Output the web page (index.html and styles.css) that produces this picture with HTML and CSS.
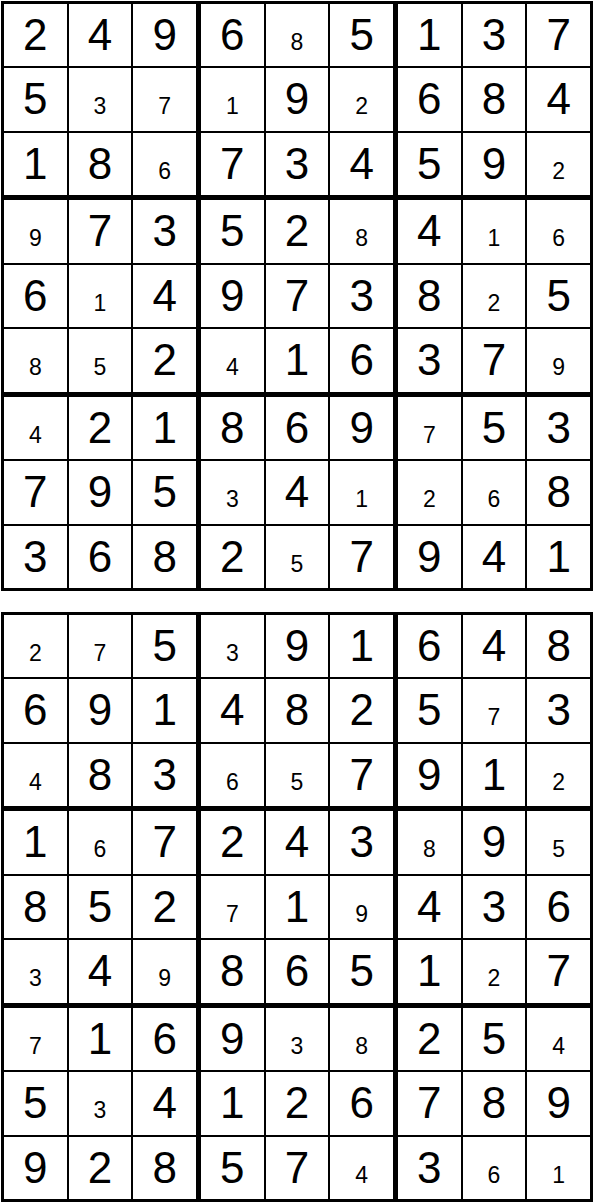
FILE: index.html
```html
<!DOCTYPE html>
<html lang="en">
<head>
  <meta charset="UTF-8">
  <meta name="viewport" content="width=device-width, initial-scale=1.0">
  <title>Sudoku</title>
  <link rel="stylesheet" href="styles.css">
</head>
<body>
  <div class="page" id="page"></div>
  <script>
    // digits per row, and which ones are printed small ("s")
    const puzzles = [
      {
        digits: ["249685137", "537192684", "186734592", "973528416", "614973825",
                 "852416379", "421869753", "795341268", "368257941"],
        small:  ["....s....", ".sss.s...", "..s.....s", "s....s.ss", ".s.....s.",
                 "ss.s....s", "s.....s..", "...s.sss.", "....s...."]
      },
      {
        digits: ["275391648", "691482573", "483657912", "167243895", "852719436",
                 "349865127", "716938254", "534126789", "928574361"],
        small:  ["ss.s.....", ".......s.", "s..ss...s", ".s....s.s", "...s.s...",
                 "s.s....s.", "s...ss..s", ".s.......", ".....s.ss"]
      }
    ];

    const page = document.getElementById('page');

    puzzles.forEach(p => {
      const grid = document.createElement('div');
      grid.className = 'sudoku';
      for (let b = 0; b < 9; b++) {
        const box = document.createElement('div');
        box.className = 'box';
        for (let k = 0; k < 9; k++) {
          const r = Math.floor(b / 3) * 3 + Math.floor(k / 3);
          const c = (b % 3) * 3 + k % 3;
          const cell = document.createElement('div');
          cell.className = 'cell';
          const span = document.createElement('span');
          if (p.small[r][c] === 's') span.className = 'small';
          span.textContent = p.digits[r][c];
          cell.appendChild(span);
          box.appendChild(cell);
        }
        grid.appendChild(box);
      }
      page.appendChild(grid);
    });
  </script>
</body>
</html>
```

FILE: styles.css
```css
body {
  margin: 0;
  background-color: #ffffff;
  font-family: "Liberation Sans", Arial, sans-serif;
}

.page {
  display: flex;
  flex-direction: column;
  gap: 21px;
  padding: 1px 0 0 1px;
}

.sudoku {
  box-sizing: border-box;
  width: 592px;
  height: 590px;
  border: 3px solid #000000;
  background-color: #000000;
  display: grid;
  grid-template-columns: repeat(3, minmax(0, 1fr));
  grid-template-rows: repeat(3, minmax(0, 1fr));
  gap: 5px;
}

.box {
  display: grid;
  grid-template-columns: repeat(3, minmax(0, 1fr));
  grid-template-rows: repeat(3, minmax(0, 1fr));
  gap: 2px;
}

.cell {
  background-color: #ffffff;
  color: #000000;
  font-size: 44px;
  line-height: 62px;
  text-align: center;
  overflow: hidden;
}

.cell .small {
  font-size: 23px;
  line-height: 1;
}
```
